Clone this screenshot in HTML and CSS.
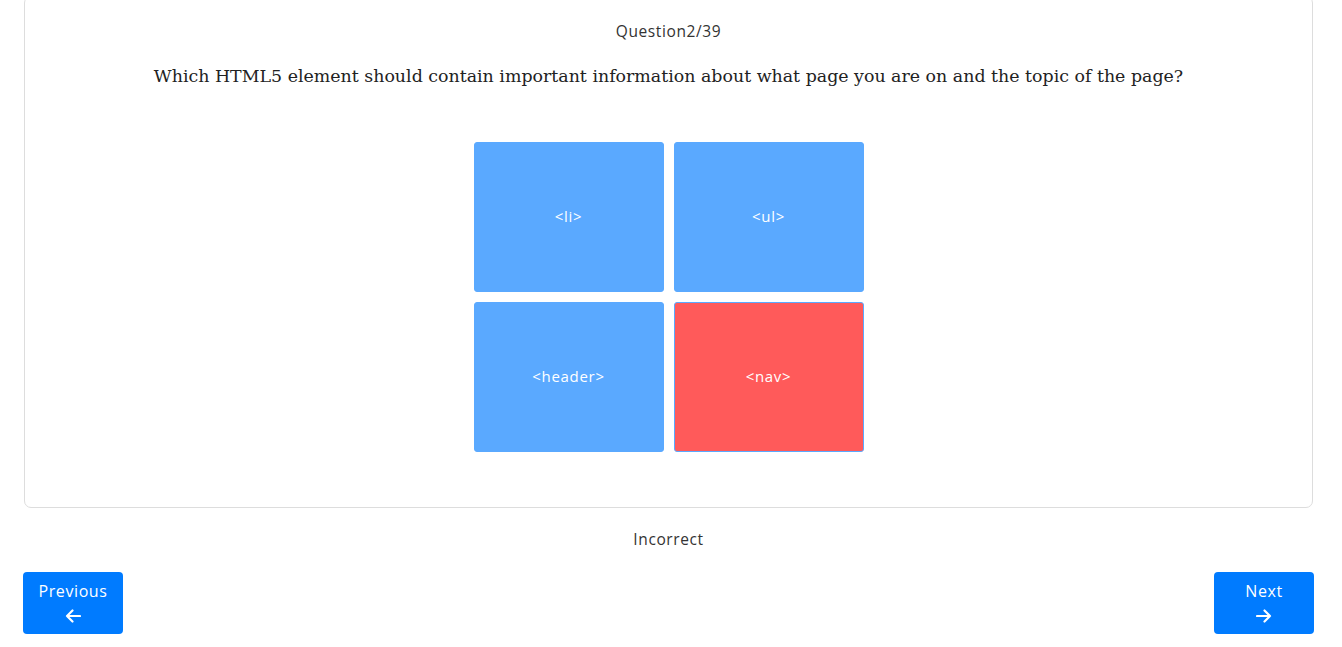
FILE: index.html
```html
<!DOCTYPE html>
<html lang="en">
<head>
    <meta charset="UTF-8">
    <meta name="viewport" content="width=device-width, initial-scale=1.0">
    <title>Quiz</title>
    <link rel="stylesheet" href="styles.css">
</head>
<body>
    <div class="quiz">
        <div class="card">
            <p class="counter">Question2/39</p>
            <h2 class="question">Which HTML5 element should contain important information about what page you are on and the topic of the page?</h2>
            <div class="answers">
                <button class="answer">&lt;li&gt;</button>
                <button class="answer">&lt;ul&gt;</button>
                <button class="answer">&lt;header&gt;</button>
                <button class="answer wrong">&lt;nav&gt;</button>
            </div>
        </div>
        <p class="result">Incorrect</p>
        <div class="nav">
            <button class="nav-btn">
                Previous
                <svg width="16" height="14" viewBox="0 0 16 14"><path d="M15 7H2M7.5 1.5L2 7l5.5 5.5" fill="none" stroke="#fff" stroke-width="2.2" stroke-linecap="round" stroke-linejoin="round"/></svg>
            </button>
            <button class="nav-btn">
                Next
                <svg width="16" height="14" viewBox="0 0 16 14"><path d="M1 7h13M8.5 1.5L14 7l-5.5 5.5" fill="none" stroke="#fff" stroke-width="2.2" stroke-linecap="round" stroke-linejoin="round"/></svg>
            </button>
        </div>
    </div>
</body>
</html>
```
FILE: styles.css
```css
* {
    box-sizing: border-box;
}

body {
    margin: 0;
    font-family: "Open Sans", Arial, sans-serif;
    color: #333;
    background: #fff;
    letter-spacing: 0.6px;
}

.quiz {
    width: 1291px;
    margin-left: 23px;
}

.card {
    margin: -4px 1px 0;
    border: 1px solid #ddd;
    border-radius: 7px;
    padding: 22px 0 55px;
    text-align: center;
}

.counter {
    margin: 0;
    font-size: 15.5px;
    line-height: 24px;
    color: #333;
}

.question {
    margin: 20px 0 0;
    font-family: "DejaVu Serif", Georgia, serif;
    font-weight: normal;
    font-size: 17.4px;
    line-height: 26px;
    letter-spacing: 0;
    color: #222;
}

.answers {
    display: grid;
    grid-template-columns: 190px 190px;
    grid-auto-rows: 150px;
    gap: 10px;
    justify-content: center;
    margin-top: 53px;
}

.answer {
    border: 1px solid #5aa9ff;
    border-radius: 3px;
    background: #5aa9ff;
    color: #fff;
    font-family: "Open Sans", Arial, sans-serif;
    font-size: 15px;
    letter-spacing: 0.7px;
    padding: 0 0 3px;
}

.answer.wrong {
    background: #ff5a5a;
}

.result {
    margin: 19px 0 0;
    text-align: center;
    font-size: 15.5px;
    line-height: 24px;
}

.nav {
    display: flex;
    justify-content: space-between;
    margin-top: 21px;
}

.nav-btn {
    width: 100px;
    height: 62px;
    border: none;
    border-radius: 4px;
    background: #007bff;
    color: #fff;
    font-family: "Open Sans", Arial, sans-serif;
    font-size: 16px;
    letter-spacing: 0.6px;
    display: flex;
    flex-direction: column;
    align-items: center;
    justify-content: center;
    gap: 7px;
    padding: 0 0 4px;
}
```
